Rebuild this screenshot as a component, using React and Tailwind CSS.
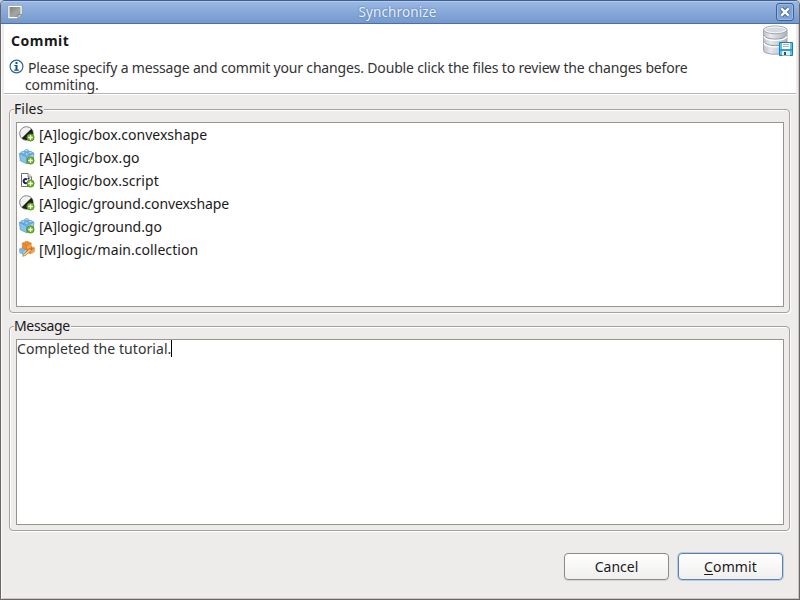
import React from 'react';

function WindowIcon() {
  return (
    <svg width="16" height="16" viewBox="0 0 16 16" className="block">
      <defs>
        <linearGradient id="win" x1="0" y1="0" x2="1" y2="1">
          <stop offset="0" stopColor="#80847e" />
          <stop offset="0.6" stopColor="#a4a7a2" />
          <stop offset="1" stopColor="#8b8e88" />
        </linearGradient>
      </defs>
      <path d="M1 1.5h14v9.5l-3.5 3.5H1z" fill="#fff" stroke="#8a8a86" strokeWidth=".5" />
      <path d="M2.5 3h11v7.5l-3 2.5h-8z" fill="url(#win)" />
      <path d="M15 10.5l-4.2 4 .2-3.6z" fill="#deded9" stroke="#777" strokeWidth=".7" />
    </svg>
  );
}

function InfoIcon() {
  return (
    <svg width="15" height="15" viewBox="0 0 15 15" className="block">
      <circle cx="7.5" cy="7.5" r="6.4" fill="#fff" stroke="#2b659c" strokeWidth="1.2" />
      <path d="M6.5 3h2v2h-2zM5.3 6h3.2v4.5h1.3v1.2H5.2v-1.2h1.3V7.1H5.3z" fill="#12538f" />
    </svg>
  );
}

function DatabaseIcon() {
  return (
    <svg width="32" height="32" viewBox="0 0 32 32" className="block">
      <defs>
        <linearGradient id="db" x1="0" x2="1">
          <stop offset="0" stopColor="#bcc3ca" />
          <stop offset="0.3" stopColor="#e6e9ec" />
          <stop offset="0.6" stopColor="#ccd2d8" />
          <stop offset="1" stopColor="#a9b1ba" />
        </linearGradient>
      </defs>
      <path d="M1.5 5v20.5c0 5 23.5 5 23.5 0V5z" fill="url(#db)" stroke="#a0a8b1" />
      <path d="M2 10c0 5.5 22.5 5.5 22.5 0M2 16.5c0 5.5 22.5 5.5 22.5 0" fill="none" stroke="#929ba5" />
      <path d="M2 11.2c0 5.5 22.5 5.5 22.5 0M2 17.7c0 5.5 22.5 5.5 22.5 0" fill="none" stroke="#fff" strokeWidth="1.3" />
      <ellipse cx="13.25" cy="4.8" rx="11.8" ry="3.9" fill="#d4dae0" stroke="#a0a8b1" />
      <ellipse cx="13.25" cy="4.8" rx="10.5" ry="2.8" fill="none" stroke="#f5f6f8" />
      <path d="M17.5 17.5h13v13h-13z" fill="#5fc0ec" stroke="#147eb8" />
      <path d="M20 18h8v6h-8z" fill="#fff" />
      <path d="M21 19.5h6M21 21.5h6" stroke="#aab4bc" />
      <path d="M18 24h12v2H18z" fill="#2d9fd8" />
      <path d="M20 26h8v4.5h-8z" fill="#e9edf0" />
      <path d="M22 27h2v3h-2z" fill="#42505c" />
    </svg>
  );
}

function AddBadge() {
  return (
    <g>
      <circle cx="11.5" cy="11.5" r="3.6" fill="#6fb524" stroke="#4f9012" strokeWidth=".9" />
      <path d="M11.5 9.3v4.4M9.3 11.5h4.4" stroke="#fff" strokeWidth="1.3" />
    </g>
  );
}

function ShapeIcon() {
  return (
    <svg width="16" height="16" viewBox="0 0 16 16" className="block">
      <circle cx="7.5" cy="7.5" r="6.8" fill="#f1f1f1" stroke="#777" strokeWidth=".9" />
      <path d="M12.3 2.7A6.8 6.8 0 0 1 2.7 12.3z" fill="#1d1d1d" />
      <AddBadge />
    </svg>
  );
}

function Brick({ top, left, right, line }) {
  return (
    <g stroke={line} strokeWidth=".7" strokeLinejoin="round">
      <path d="M.5 4.5L8 1.8l6.9 2.4-7.2 3.9z" fill={top} />
      <path d="M.5 4.5l7.2 3.6v6.6L1.3 11.8z" fill={left} />
      <path d="M7.7 8.1l7.2-3.9-.6 7.4-6.6 3.1z" fill={right} />
      <path d="M2.2 3.3v1.4c0 1.2 3.8 1.2 3.8 0V3.3M9.4 3.3v1.4c0 1.2 3.8 1.2 3.8 0V3.3M5.8 1.5v1.2c0 1.2 3.8 1.2 3.8 0V1.5M5.8 5.1v1.3c0 1.2 3.8 1.2 3.8 0V5.1" fill={left} />
      <g fill={top}>
        <ellipse cx="4.1" cy="3.3" rx="1.9" ry=".9" />
        <ellipse cx="11.3" cy="3.3" rx="1.9" ry=".9" />
        <ellipse cx="7.7" cy="1.5" rx="1.9" ry=".9" />
        <ellipse cx="7.7" cy="5.1" rx="1.9" ry=".9" />
      </g>
    </g>
  );
}

function ObjectIcon() {
  return (
    <svg width="16" height="16" viewBox="0 0 16 16" className="block">
      <Brick top="#d3edfd" left="#86c2ed" right="#9dd0f5" line="#4f96cd" />
      <AddBadge />
    </svg>
  );
}

function ScriptIcon() {
  return (
    <svg width="16" height="16" viewBox="0 0 16 16" className="block">
      <path d="M2.5 1.5h6.5l3.5 3.5v9.5h-10z" fill="#fff" stroke="#77736a" />
      <path d="M9 1.5V5h3.5" fill="#ddd" stroke="#77736a" strokeWidth=".8" />
      <path d="M8 7.6A2 2 0 1 0 8 10.6" fill="none" stroke="#18196b" strokeWidth="1.9" />
      <circle cx="9.6" cy="6.4" r="1" fill="#18196b" />
      <AddBadge />
    </svg>
  );
}

function CollectionIcon() {
  return (
    <svg width="16" height="16" viewBox="0 0 16 16" className="block">
      <g transform="translate(0 6) scale(.5)">
        <Brick top="#d3edfd" left="#86c2ed" right="#9dd0f5" line="#4f96cd" />
      </g>
      <g transform="translate(7.2 4.6) scale(.56)">
        <Brick top="#ffcb80" left="#ee8a2c" right="#fba545" line="#d06c17" />
      </g>
      <g transform="translate(2.8 -.4) scale(.64)">
        <Brick top="#ffcb80" left="#ee8a2c" right="#fba545" line="#d06c17" />
      </g>
      <path d="M4.5 13.2l6.6-5.5 1.5 1.6-6.4 5.3-2.5.6z" fill="#f5d98b" stroke="#96702d" strokeWidth=".7" />
      <path d="M11.1 7.7l1.2-.9 1.5 1.5-1.2 1z" fill="#d65555" />
    </svg>
  );
}

const files = [
  ['[A]logic/box.convexshape', ShapeIcon, 'tracking-[0px]'],
  ['[A]logic/box.go', ObjectIcon, 'tracking-[0.08px]'],
  ['[A]logic/box.script', ScriptIcon, 'tracking-[0.05px]'],
  ['[A]logic/ground.convexshape', ShapeIcon, 'tracking-[-0.08px]'],
  ['[A]logic/ground.go', ObjectIcon, 'tracking-[-0.05px]'],
  ['[M]logic/main.collection', CollectionIcon, 'tracking-[0.05px]'],
];

function Group({ label, labelClass, className, children }) {
  return (
    <section className={`mr-[9px] ml-[7px] flex flex-col rounded-[4px] border border-[#a3a19e] pr-[5px] pb-[5px] pl-1.5 shadow-[1px_1px_0_#fff,inset_1px_1px_0_#fff] ${className}`}>
      <h2 className={`-ml-0.5 -mt-[12px] mb-px h-[23px] self-start bg-[#edeceb] leading-[22px] whitespace-nowrap ${labelClass}`}>{label}</h2>
      {children}
    </section>
  );
}

export default function App() {
  return (
    <div className="flex h-[600px] w-[800px] flex-col overflow-hidden bg-[#c5d1df] font-['Noto_Sans',sans-serif] text-[14px] text-[#1a1a1a]">
      <div className="flex h-[600px] flex-col overflow-hidden rounded-t-[5px] border border-[#6b6663] border-t-[#405f8d] bg-[#edeceb] shadow-[inset_-1px_-1px_0_#c9c7c5]">
        <header className="flex h-[23px] shrink-0 items-center border-b border-[#4b70a6] bg-linear-to-b from-[#9bb9e5] to-[#7499cd] pr-[5px] pl-1.5 shadow-[inset_0_1px_0_#b3ccee]">
          <WindowIcon />
          <h1 className="flex-1 pr-1 text-center text-[13.5px] leading-[22px] font-normal tracking-[0.1px] text-[#e8f0fb] [text-shadow:0_0_2px_#426697]">Synchronize</h1>
          <button aria-label="Close" className="flex h-[18px] w-[18px] items-center justify-center rounded-[3px] border border-[#3e6297] bg-[#80a3d5] shadow-[inset_0_0_0_1px_#9bb9e2]">
            <svg width="12" height="12" viewBox="0 0 12 12" className="shrink-0">
              <path d="M2.3 2.3l7.4 7.4M9.7 2.3l-7.4 7.4" stroke="#3f6499" strokeWidth="4.4" />
              <path d="M2.3 2.3l7.4 7.4M9.7 2.3l-7.4 7.4" stroke="#f7faff" strokeWidth="2.6" />
            </svg>
          </button>
        </header>
        <main className="flex flex-1 flex-col border-l border-[#fafafa]">
          <div className="mr-[3px] ml-0.5 flex h-[70px] shrink-0 justify-between border-b border-[#b5b4b2] bg-white shadow-[0_1px_0_#fff]">
            <div className="pl-[7px]">
              <h2 className="mt-[7px] h-[20px] leading-[20px] font-bold tracking-[0.5px]">Commit</h2>
              <div className="mt-2 flex items-start text-[#333]">
                <div className="-ml-[2px] w-[16px]"><InfoIcon /></div>
                <p className="indent-[3px] leading-[17px] tracking-[-0.168px] whitespace-nowrap">
                  Please specify a message and commit your changes. Double click the files to review the changes before
                  <br />
                  <span className="tracking-[-0.1px]">commiting.</span>
                </p>
              </div>
            </div>
            <div className="mt-[1px] mr-[2px]"><DatabaseIcon /></div>
          </div>
          <Group label="Files" labelClass="w-[30px]" className="mt-[15px] h-[204px]">
            <ul className="flex-1 border border-[#989591] bg-white px-0.5">
              {files.map(([name, Icon, track]) => (
                <li key={name} className="flex h-[23px] items-center gap-1">
                  <div className="-mt-px"><Icon /></div>
                  <span className={`whitespace-nowrap ${track}`}>{name}</span>
                </li>
              ))}
            </ul>
          </Group>
          <Group label="Message" labelClass="w-[57px] tracking-[-0.35px]" className="mt-[13px] h-[205px]">
            <div className="flex flex-1 items-start border border-[#989591] bg-white">
              <span className="leading-[18px] tracking-[0.07px] text-[#333]">Completed the tutorial.</span>
              <span className="h-[17px] w-px bg-black" />
            </div>
          </Group>
          <footer className="mt-[22px] flex justify-end gap-[9px] pr-[16px]">
            <button className="h-[27px] w-[105px] rounded-[4px] border border-[#8d8b88] bg-linear-to-b from-white to-[#f0efee] shadow-[0_1px_1px_#d5d3d0]">Cancel</button>
            <button className="h-[27px] w-[105px] rounded-[4px] border border-[#5d80ae] bg-linear-to-b from-white to-[#f0efee] tracking-[0.1px] shadow-[0_0_0_1px_#b9cbe2]"><span className="underline underline-offset-2">C</span>ommit</button>
          </footer>
        </main>
      </div>
    </div>
  );
}
